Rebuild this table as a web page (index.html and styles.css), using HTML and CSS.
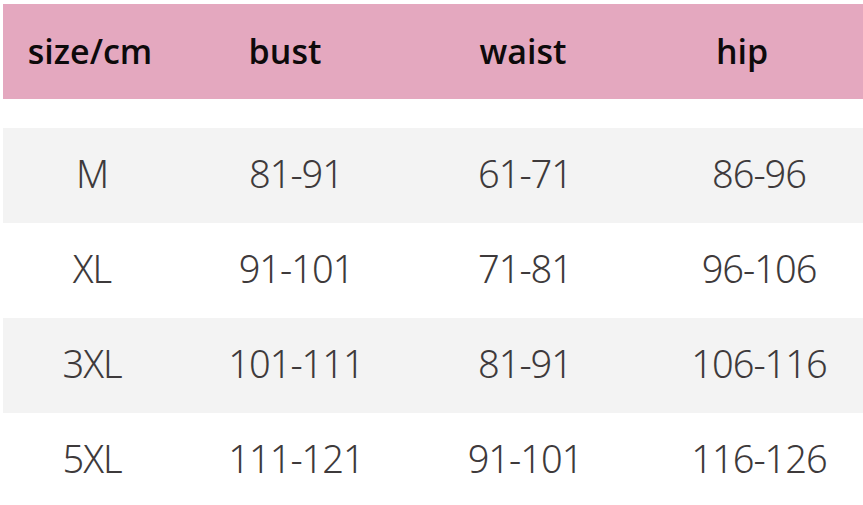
FILE: index.html
```html
<!DOCTYPE html>
<html>
<head>
<meta charset="utf-8">
<link rel="stylesheet" href="styles.css">
</head>
<body>
<div class="chart">
  <div class="head">
    <div class="hc">size/cm</div>
    <div class="hc">bust</div>
    <div class="hc">waist</div>
    <div class="hc">hip</div>
    <div></div>
  </div>
  <div class="rows">
    <div class="row alt"><div class="c">M</div><div class="c">81-91</div><div class="c">61-71</div><div class="c last">86-96</div></div>
    <div class="row"><div class="c">XL</div><div class="c">91-101</div><div class="c">71-81</div><div class="c last">96-106</div></div>
    <div class="row alt"><div class="c">3XL</div><div class="c">101-111</div><div class="c">81-91</div><div class="c last">106-116</div></div>
    <div class="row"><div class="c">5XL</div><div class="c">111-121</div><div class="c">91-101</div><div class="c last">116-126</div></div>
  </div>
</div>
</body>
</html>
```

FILE: styles.css
```css
html, body {
  margin: 0;
  padding: 0;
  background: #ffffff;
  overflow: hidden;
}
.chart {
  width: 863px;
  height: 505px;
  padding: 4px 0 0 3px;
  box-sizing: border-box;
}
.head {
  height: 95px;
  background: #e4a8bf;
  display: grid;
  grid-template-columns: 174px 216px 260px 178px 1fr;
  align-items: center;
  font-family: "Open Sans", "Noto Sans", sans-serif;
  font-weight: 600;
  font-size: 34px;
  color: #0d0a0b;
}
.hc {
  text-align: center;
  padding-bottom: 1px;
}
.rows {
  margin-top: 29px;
}
.row {
  height: 95px;
  display: grid;
  grid-template-columns: 178px 230px 228px 1fr;
  align-items: center;
  font-family: "Noto Sans", "Open Sans", sans-serif;
  font-weight: 300;
  font-size: 38px;
  letter-spacing: -1px;
  color: #3e3a3b;
}
.row.alt {
  background: #f3f3f3;
}
.c {
  text-align: center;
  padding-bottom: 6px;
}
.c.last {
  padding-left: 16px;
}
```
